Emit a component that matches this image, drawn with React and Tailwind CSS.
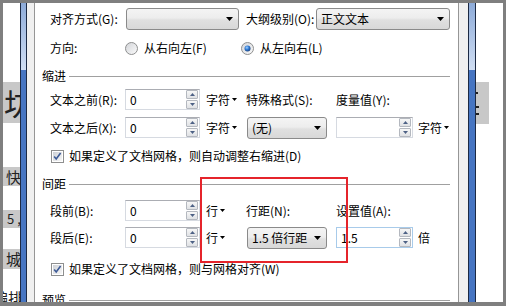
import React from 'react';

const Caret = () => (
  <svg width="7" height="4" viewBox="0 0 7 4" className="shrink-0">
    <path d="M0 0h7L3.5 4z" fill="#000" />
  </svg>
);

const Unit = ({ label, className }) => (
  <div className={`flex items-center gap-[2px] ${className}`}>
    <span>{label}</span>
    <svg width="5" height="3" viewBox="0 0 5 3">
      <path d="M0 0h5L2.5 3z" fill="#000" />
    </svg>
  </div>
);

const Select = ({ w, children }) => (
  <div
    className={`${w} h-[22px] shrink-0 flex items-center justify-between pl-[4px] pr-[5px] border border-[#8a8a8a] rounded-[3px] bg-[linear-gradient(#f4f4f4,#ededed_45%,#e0e0e0_55%,#d8d8d8)]`}
  >
    <span>{children}</span>
    <Caret />
  </div>
);

const SpinArrow = ({ up }) => (
  <svg width="5" height="3" viewBox="0 0 5 3">
    <path d={up ? 'M0 3h5L2.5 0z' : 'M0 0h5L2.5 3z'} fill="#4d6185" />
  </svg>
);

const Spin = () => (
  <div className="flex flex-col w-[12px] h-[19px] gap-px shrink-0">
    <div className="flex-1 flex items-center justify-center border border-[#b4b8bf] rounded-[1px] bg-[linear-gradient(#f7f7f7,#dfe1e4)]">
      <SpinArrow up />
    </div>
    <div className="flex-1 flex items-center justify-center border border-[#b4b8bf] rounded-[1px] bg-[linear-gradient(#f7f7f7,#dfe1e4)]">
      <SpinArrow />
    </div>
  </div>
);

const Field = ({ value, w, active }) => (
  <div
    className={`${w} h-[21px] shrink-0 flex items-center justify-between pl-[4px] pr-px bg-white border ${
      active ? 'border-[#a8cbea]' : 'border-[#d6dae1] border-t-[#abadb3]'
    }`}
  >
    <span>{value}</span>
    <Spin />
  </div>
);

const Checkbox = () => (
  <svg width="13" height="13" viewBox="0 0 13 13" className="shrink-0">
    <defs>
      <linearGradient id="cb" x1="0" y1="0" x2="1" y2="1">
        <stop offset="0" stopColor="#cdd0d5" />
        <stop offset="1" stopColor="#f7f7f7" />
      </linearGradient>
    </defs>
    <rect x="0.5" y="0.5" width="12" height="12" fill="#fff" stroke="#8e8f8f" />
    <rect x="2" y="2" width="9" height="9" fill="url(#cb)" />
    <path d="M3.2 6.6l2 2.4 4.4-6" fill="none" stroke="#3c5a96" strokeWidth="1.6" />
  </svg>
);

const Radio = ({ on }) => (
  <svg width="13" height="13" viewBox="0 0 13 13" className="shrink-0">
    <defs>
      <linearGradient id="rg" x1="0" y1="0" x2="1" y2="1">
        <stop offset="0" stopColor="#d2d4d8" />
        <stop offset="1" stopColor="#fbfbfb" />
      </linearGradient>
      <radialGradient id="rd" cx="0.4" cy="0.35" r="0.7">
        <stop offset="0" stopColor="#9fd0ff" />
        <stop offset="0.5" stopColor="#2d78d2" />
        <stop offset="1" stopColor="#1c3f78" />
      </radialGradient>
    </defs>
    <circle cx="6.5" cy="6.5" r="6" fill="url(#rg)" stroke="#8e8f8f" />
    {on && <circle cx="6.5" cy="6.5" r="3" fill="url(#rd)" />}
  </svg>
);

const Section = ({ title, className }) => (
  <div className={`flex items-center h-[16px] pl-[7px] pr-[8px] shrink-0 ${className}`}>
    <span>{title}</span>
    <div className="flex-1 h-px bg-[#a0a0a0] ml-[3px]" />
  </div>
);

// blue window frame edge
const Bar = ({ w }) => (
  <div className={`${w} flex flex-col shrink-0 border-x border-[#1c2a44]`}>
    <div className="h-[67px] bg-[linear-gradient(#8dabd9,#d0def3)]" />
    <div className="flex-1 bg-[#4675c2]" />
  </div>
);

export default function App() {
  return (
    <div className="w-[506px] h-[306px] flex overflow-hidden bg-white border-[#7f7f7f] border-t-[3px] border-x-[3px] border-b-[4px] font-['Noto_Sans_CJK_SC',sans-serif] text-[12px] leading-[16px] text-black">
      {/* document behind the dialog, left */}
      <div className="w-[17px] shrink-0 flex flex-col overflow-hidden text-[#222] whitespace-nowrap">
        <div className="h-[79px] shrink-0" />
        <div className="h-[41px] shrink-0 bg-[#c8c8c8] text-[30px] leading-[41px] pl-[1px]">坊</div>
        <div className="h-[44px] shrink-0" />
        <div className="h-[19px] shrink-0 bg-[#c8c8c8] text-[15px] leading-[19px] pl-[3px]">快</div>
        <div className="h-[24px] shrink-0" />
        <div className="h-[18px] shrink-0 bg-[#c8c8c8] text-[13px] leading-[18px] pl-[4px]">5 ,</div>
        <div className="h-[21px] shrink-0" />
        <div className="h-[20px] shrink-0 bg-[#c8c8c8] text-[15px] leading-[20px] pl-[3px]">城</div>
        <div className="h-[20px] shrink-0" />
        <div className="h-[14px] shrink-0 text-[15px] leading-[18px] -ml-[10px]">编排</div>
      </div>

      <Bar w="w-[7px]" />
      <div className="w-[8px] shrink-0 bg-[#f0f0f0] border-r border-[#969696]" />

      {/* dialog content */}
      <div className="relative w-[423px] shrink-0 flex flex-col overflow-hidden bg-white">
        <div className="mt-[5px] h-[22px] pl-[15px] flex items-center shrink-0">
          <span className="w-[76px]">对齐方式(G):</span>
          <Select w="w-[113px]" />
          <span className="w-[77px] pl-[7px]">大纲级别(O):</span>
          <Select w="w-[134px]">正文文本</Select>
        </div>

        <div className="mt-[8px] h-[20px] pl-[15px] flex items-center shrink-0">
          <span className="w-[75px]">方向:</span>
          <Radio />
          <span className="w-[103px] pl-[6px]">从右向左(F)</span>
          <Radio on />
          <span className="pl-[6px]">从左向右(L)</span>
        </div>

        <Section title="缩进" className="mt-[10px]" />

        <div className="mt-[5px] h-[21px] pl-[15px] flex items-center shrink-0">
          <span className="w-[75px]">文本之前(R):</span>
          <Field w="w-[75px]" value="0" />
          <Unit label="字符" className="w-[46px] pl-[6px]" />
          <span className="w-[90px]">特殊格式(S):</span>
          <span>度量值(Y):</span>
        </div>

        <div className="mt-[7px] h-[21px] pl-[15px] flex items-center shrink-0">
          <span className="w-[75px]">文本之后(X):</span>
          <Field w="w-[75px]" value="0" />
          <Unit label="字符" className="w-[47px] pl-[6px]" />
          <Select w="w-[80px]">(无)</Select>
          <div className="ml-[9px]">
            <Field w="w-[77px]" value="" />
          </div>
          <Unit label="字符" className="pl-[5px]" />
        </div>

        <div className="mt-[10px] h-[16px] pl-[16px] flex items-center shrink-0">
          <Checkbox />
          <span className="pl-[5px]">如果定义了文档网格，则自动调整右缩进(D)</span>
        </div>

        <Section title="间距" className="mt-[12px]" />

        <div className="mt-[8px] h-[21px] pl-[15px] flex items-center shrink-0">
          <span className="w-[75px]">段前(B):</span>
          <Field w="w-[75px]" value="0" />
          <Unit label="行" className="w-[46px] pl-[6px]" />
          <span className="w-[90px]">行距(N):</span>
          <span>设置值(A):</span>
        </div>

        <div className="mt-[6px] h-[21px] pl-[15px] flex items-center shrink-0">
          <span className="w-[75px]">段后(E):</span>
          <Field w="w-[75px]" value="0" />
          <Unit label="行" className="w-[47px] pl-[6px]" />
          <Select w="w-[80px]">1.5 倍行距</Select>
          <div className="ml-[9px]">
            <Field w="w-[77px]" value="1.5" active />
          </div>
          <span className="pl-[5px]">倍</span>
        </div>

        <div className="mt-[13px] h-[16px] pl-[16px] flex items-center shrink-0">
          <Checkbox />
          <span className="pl-[5px]">如果定义了文档网格，则与网格对齐(W)</span>
        </div>

        <Section title="预览" className="mt-[15px]" />

        {/* red annotation box */}
        <div className="absolute left-[165px] top-[174px] w-[148px] h-[86px] border-2 border-[#e5242b]" />
      </div>

      <div className="w-[10px] shrink-0 bg-[#f0f0f0] border-l border-[#969696]" />
      <Bar w="w-[8px]" />

      {/* document behind the dialog, right */}
      <div className="w-[27px] shrink-0 flex flex-col overflow-hidden">
        <div className="h-[79px] shrink-0" />
        <div className="h-[42px] w-[13px] shrink-0 bg-[#c8c8c8] flex flex-col">
          <div className="mt-[10px] w-[2px] h-[2px] bg-[#222]" />
          <div className="mt-[12px] w-[3px] h-[2px] bg-[#222]" />
          <div className="mt-[5px] w-[3px] h-[2px] bg-[#222]" />
        </div>
      </div>
    </div>
  );
}
